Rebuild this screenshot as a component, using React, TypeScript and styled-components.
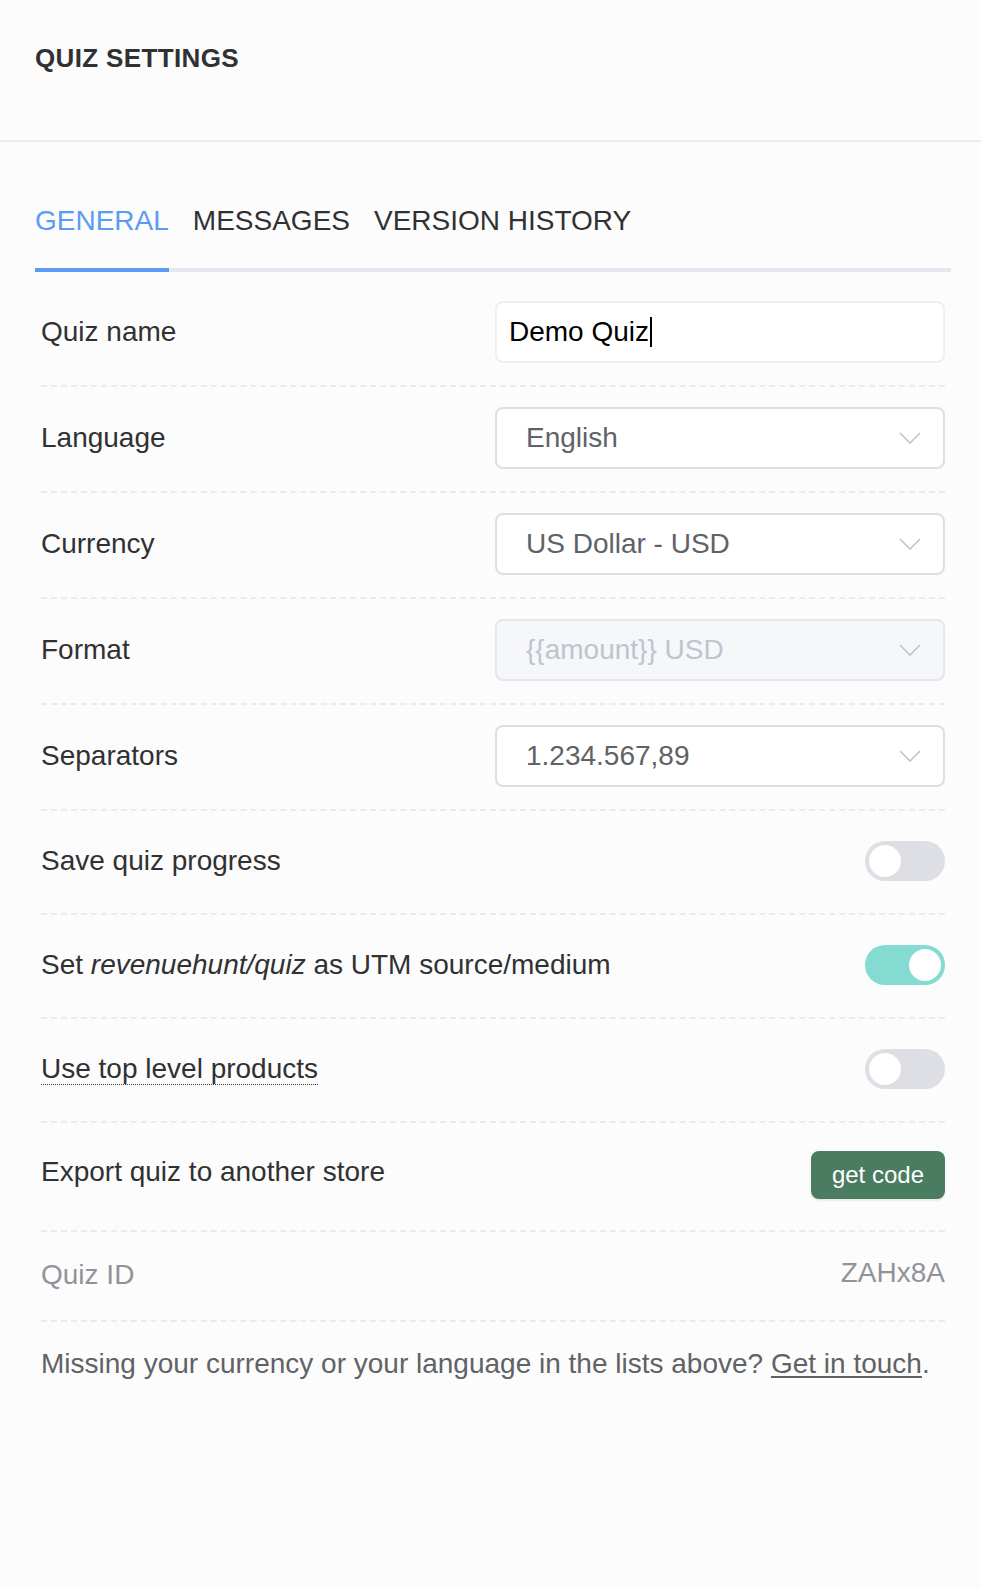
import React from "react";
import styled, { createGlobalStyle } from "styled-components";

const GlobalStyle = createGlobalStyle`
  html, body {
    margin: 0;
    padding: 0;
    background: #fcfcfc;
  }
  body {
    font-family: "Liberation Sans", Arial, sans-serif;
    color: #303133;
  }
`;

const Page = styled.div`
  width: 981px;
  min-height: 1588px;
  background: #fcfcfc;
`;

const Header = styled.header`
  box-sizing: border-box;
  height: 142px;
  padding: 43px 35px 0;
  border-bottom: 2px solid #ececee;
`;

const Title = styled.h1`
  margin: 0;
  font-size: 26px;
  font-weight: 700;
  line-height: 30px;
  letter-spacing: 0.35px;
  color: #303133;
`;

const Main = styled.main`
  padding: 0 30px 0 35px;
`;

const TabBar = styled.nav`
  display: flex;
  gap: 24px;
  margin-top: 63px;
  border-bottom: 4px solid #e4e7ed;
`;

const Tab = styled.div<{ $active?: boolean }>`
  font-size: 28px;
  line-height: 32px;
  padding-bottom: 31px;
  margin-bottom: -4px;
  border-bottom: 4px solid ${(p) => (p.$active ? "#5b9bf3" : "transparent")};
  color: ${(p) => (p.$active ? "#5b9bf3" : "#303133")};
  cursor: pointer;
`;

const List = styled.div`
  margin-top: 9px;
  padding: 0 6px;
`;

const Row = styled.div<{ $min?: number; $align?: string; $pad?: string }>`
  display: flex;
  justify-content: space-between;
  align-items: ${(p) => p.$align || "center"};
  min-height: ${(p) => p.$min ?? 62}px;
  padding: ${(p) => p.$pad || "20px 0 22px"};
  border-bottom: 2px dashed #ebebed;
`;

const Label = styled.div<{ $muted?: boolean; $offset?: number }>`
  font-size: 28px;
  line-height: 32px;
  color: ${(p) => (p.$muted ? "#909399" : "#303133")};
  margin-top: ${(p) => p.$offset ?? 0}px;
`;

const Dotted = styled.span`
  border-bottom: 1px dotted #303133;
`;

const Field = styled.div`
  box-sizing: border-box;
  width: 450px;
  height: 62px;
  display: flex;
  align-items: center;
  padding: 0 12px 0 12px;
  background: #fff;
  border: 2px solid #efeff1;
  border-radius: 8px;
  font-size: 28px;
  color: #000;
`;

const Caret = styled.span`
  display: inline-block;
  width: 1.5px;
  height: 30px;
  background: #000;
  margin-left: 1px;
`;

const Select = styled.div<{ $disabled?: boolean }>`
  box-sizing: border-box;
  width: 450px;
  height: 62px;
  display: flex;
  align-items: center;
  justify-content: space-between;
  padding: 0 22px 0 29px;
  background: ${(p) => (p.$disabled ? "#f5f7fa" : "#fff")};
  border: 2px solid ${(p) => (p.$disabled ? "#e4e7ed" : "#dcdfe6")};
  border-radius: 8px;
  font-size: 28px;
  color: ${(p) => (p.$disabled ? "#c0c4cc" : "#606266")};
`;

const Toggle = styled.div<{ $on?: boolean }>`
  position: relative;
  width: 80px;
  height: 40px;
  border-radius: 20px;
  background: ${(p) => (p.$on ? "#84dbd1" : "#dedfe5")};
  flex-shrink: 0;
  &::after {
    content: "";
    position: absolute;
    top: 4px;
    left: ${(p) => (p.$on ? "44px" : "4px")};
    width: 32px;
    height: 32px;
    border-radius: 50%;
    background: #fff;
  }
`;

const Button = styled.button`
  height: 48px;
  padding: 0 21px;
  border: none;
  border-radius: 8px;
  background: #4a7c62;
  color: #fff;
  font-family: "Liberation Sans", Arial, sans-serif;
  font-size: 24px;
  box-shadow: 0 2px 2px rgba(0, 0, 0, 0.08);
  cursor: pointer;
`;

const Value = styled.div`
  font-size: 28px;
  line-height: 42px;
  color: #909399;
`;

const Footer = styled.p`
  margin: 0;
  padding: 26px 6px 0;
  font-size: 28px;
  line-height: 32px;
  color: #606266;
`;

const Link = styled.a`
  color: #606266;
  text-decoration: underline;
  text-underline-offset: 3px;
`;

const Chevron = () => (
  <svg width="22" height="12" viewBox="0 0 22 12" fill="none">
    <polyline points="1,1 11,11 21,1" stroke="#c0c4cc" strokeWidth="1.6" />
  </svg>
);

export default function App() {
  return (
    <Page>
      <GlobalStyle />
      <Header>
        <Title>QUIZ SETTINGS</Title>
      </Header>
      <Main>
        <TabBar>
          <Tab $active>GENERAL</Tab>
          <Tab>MESSAGES</Tab>
          <Tab>VERSION HISTORY</Tab>
        </TabBar>
        <List>
          <Row>
            <Label>Quiz name</Label>
            <Field>
              Demo Quiz
              <Caret />
            </Field>
          </Row>
          <Row>
            <Label>Language</Label>
            <Select>
              English
              <Chevron />
            </Select>
          </Row>
          <Row>
            <Label>Currency</Label>
            <Select>
              US Dollar - USD
              <Chevron />
            </Select>
          </Row>
          <Row>
            <Label>Format</Label>
            <Select $disabled>
              {"{{amount}} USD"}
              <Chevron />
            </Select>
          </Row>
          <Row>
            <Label>Separators</Label>
            <Select>
              1.234.567,89
              <Chevron />
            </Select>
          </Row>
          <Row $min={60}>
            <Label>Save quiz progress</Label>
            <Toggle />
          </Row>
          <Row $min={60}>
            <Label>
              Set <em>revenuehunt/quiz</em> as UTM source/medium
            </Label>
            <Toggle $on />
          </Row>
          <Row $min={60}>
            <Label>
              <Dotted>Use top level products</Dotted>
            </Label>
            <Toggle />
          </Row>
          <Row $align="flex-start" $min={48} $pad="28px 0 31px">
            <Label $offset={5}>Export quiz to another store</Label>
            <Button>get code</Button>
          </Row>
          <Row $align="flex-start" $min={44} $pad="20px 0 24px">
            <Label $muted $offset={7}>
              Quiz ID
            </Label>
            <Value>ZAHx8A</Value>
          </Row>
        </List>
        <Footer>
          Missing your currency or your language in the lists above?{" "}
          <Link href="#">Get in touch</Link>.
        </Footer>
      </Main>
    </Page>
  );
}
